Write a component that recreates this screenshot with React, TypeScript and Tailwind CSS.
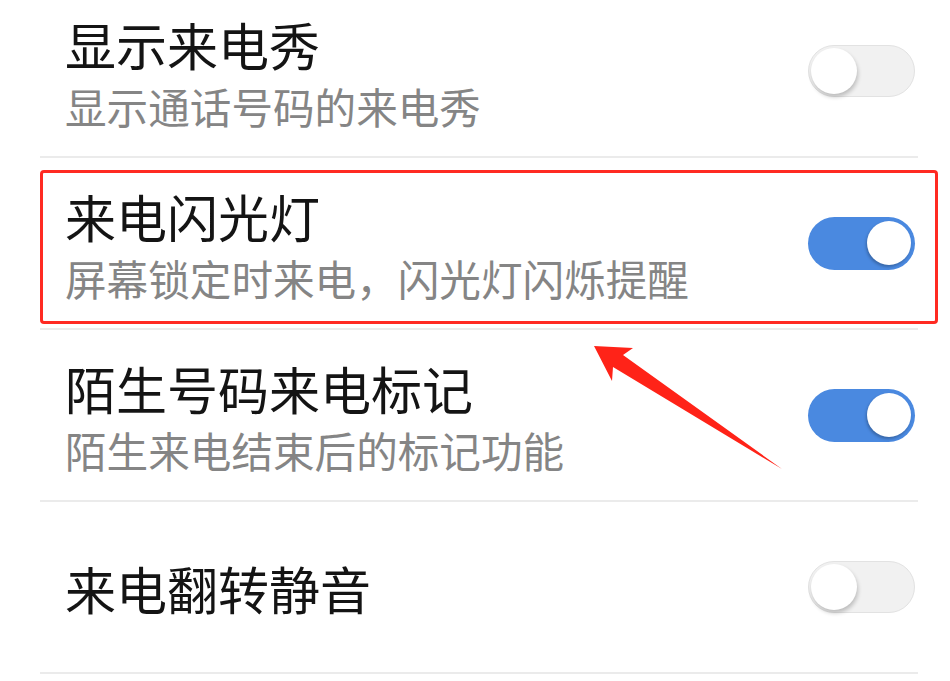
import { useState } from 'react'

type Row = {
  title: string
  desc?: string
  on: boolean
}

const ROWS: Row[] = [
  { title: '显示来电秀', desc: '显示通话号码的来电秀', on: false },
  { title: '来电闪光灯', desc: '屏幕锁定时来电，闪光灯闪烁提醒', on: true },
  { title: '陌生号码来电标记', desc: '陌生来电结束后的标记功能', on: true },
  { title: '来电翻转静音', on: false },
]

function Toggle({ on, onClick }: { on: boolean; onClick: () => void }) {
  return (
    <button
      onClick={onClick}
      className={
        on
          ? 'flex h-[53px] w-[107px] shrink-0 items-center justify-end rounded-full bg-[#4a89e0] px-[4px]'
          : 'flex h-[52px] w-[107px] shrink-0 items-center justify-start rounded-full border border-[#e2e2e2] bg-[#f1f1f1] px-[2px]'
      }
    >
      <span
        className={
          on
            ? 'block h-[44px] w-[44px] rounded-full bg-white shadow-[-1px_2px_3px_rgba(0,0,0,0.25)]'
            : 'block h-[46px] w-[46px] rounded-full bg-white shadow-[1px_3px_4px_rgba(0,0,0,0.22)]'
        }
      />
    </button>
  )
}

export default function App() {
  const [rows, setRows] = useState(ROWS)

  const flip = (i: number) =>
    setRows((r) => r.map((row, j) => (j === i ? { ...row, on: !row.on } : row)))

  return (
    <div
      className="relative h-[681px] w-[950px] overflow-hidden bg-white"
      style={{ fontFamily: '"Noto Sans CJK SC", "Noto Sans", sans-serif' }}
    >
      <div className="-mt-[14px]">
        {rows.map((row, i) => (
          <div
            key={row.title}
            className="relative ml-[40px] mr-[32px] flex h-[172px] items-center justify-between border-b-2 border-[#ebebeb] pl-[25px] pr-[3px]"
          >
            <div className={row.desc ? 'mt-[8px]' : 'mt-[2px]'}>
              <p className="text-[51px] leading-[62px] text-[#141414]">{row.title}</p>
              {row.desc && (
                <p className="text-[41.6px] leading-[62px] text-[#858585]">{row.desc}</p>
              )}
            </div>
            <Toggle on={row.on} onClick={() => flip(i)} />

            {/* Red highlight box */}
            {i === 1 && (
              <div className="pointer-events-none absolute bottom-[4px] left-0 right-[-20px] top-[12px] rounded-[4px] border-[3px] border-[#ff2a22]" />
            )}
          </div>
        ))}
      </div>

      {/* Annotation arrow */}
      <svg
        className="pointer-events-none absolute left-0 top-0"
        width="950"
        height="681"
        viewBox="0 0 950 681"
      >
        <polygon
          points="594,346 633,348 623,355 782,469 613,367 612,381"
          fill="#ff2318"
        />
      </svg>
    </div>
  )
}
